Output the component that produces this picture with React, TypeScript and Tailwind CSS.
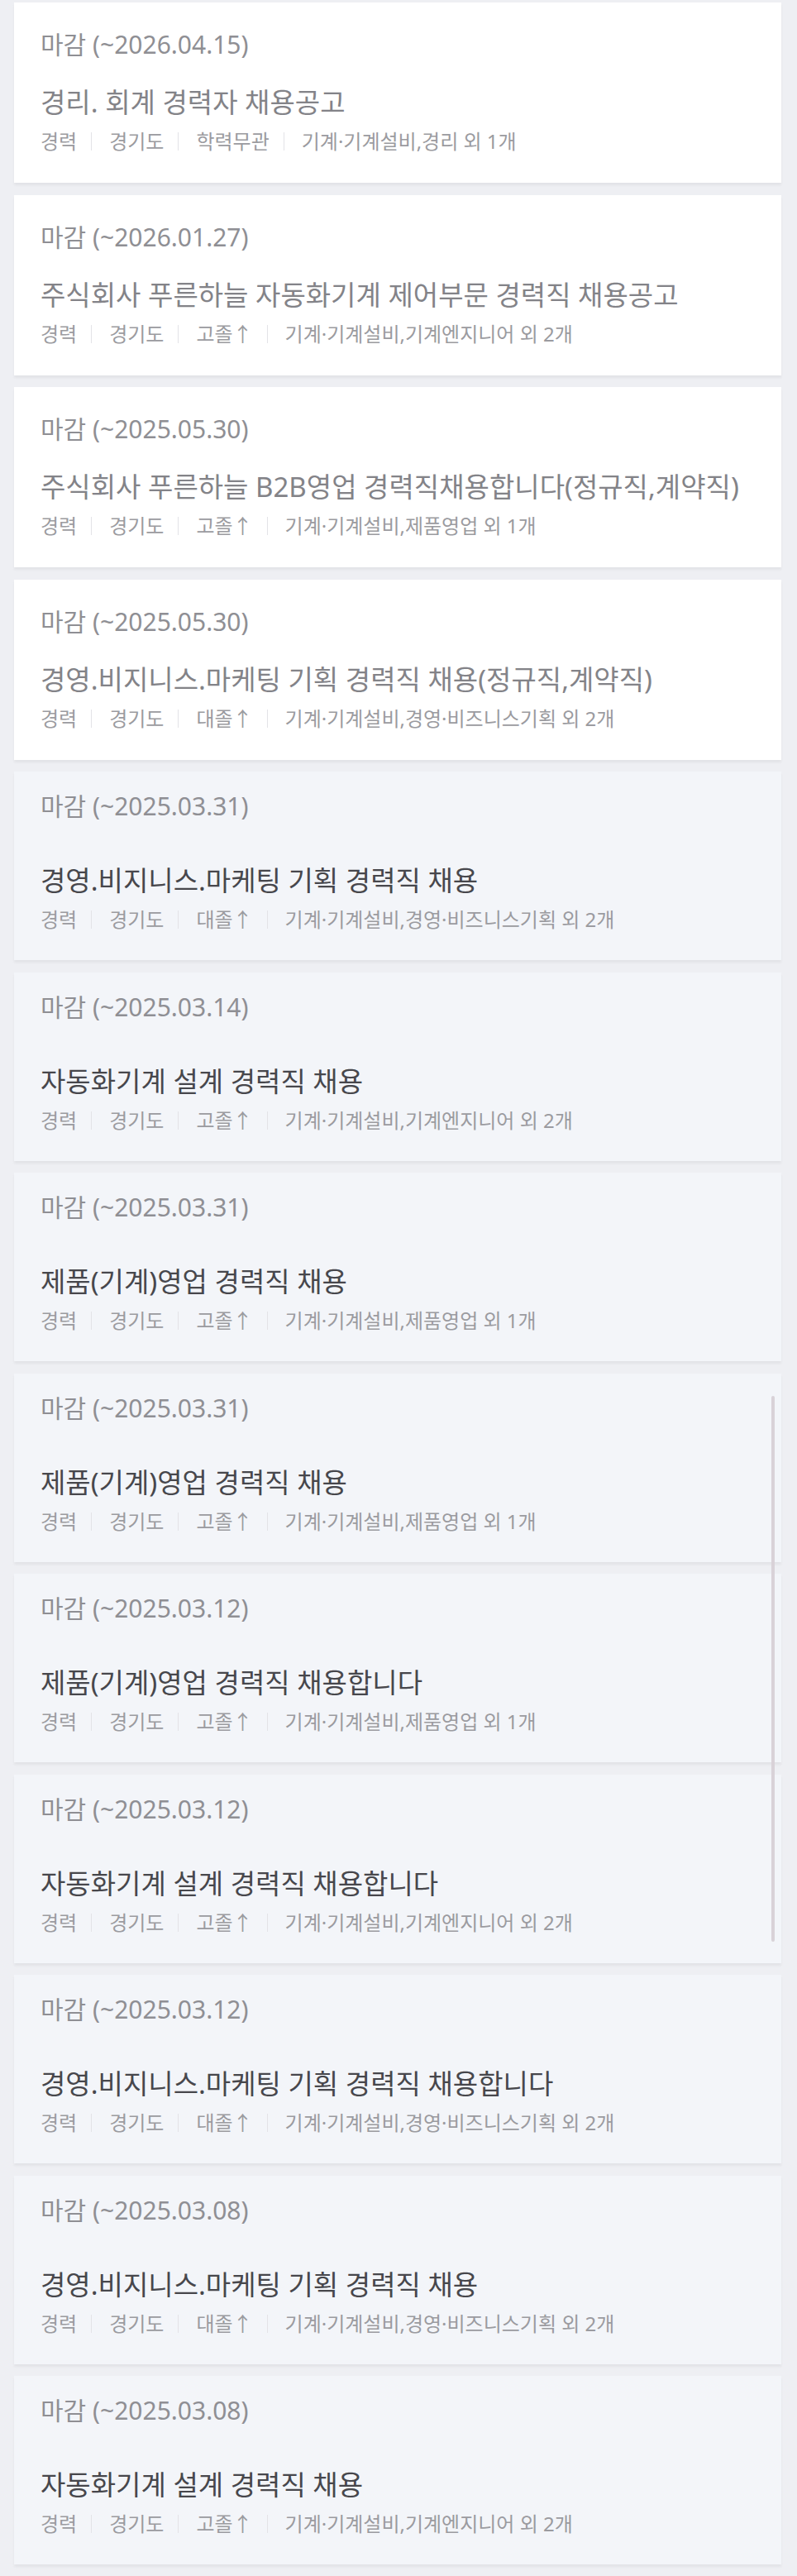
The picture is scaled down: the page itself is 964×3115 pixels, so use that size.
import React from 'react';

type Job = {
  deadline: string;
  title: string;
  edu: string;
  jobs: string;
  closed?: boolean;
};

const jobs: Job[] = [
  { deadline: '2026.04.15', title: '경리. 회계 경력자 채용공고', edu: '학력무관', jobs: '기계·기계설비,경리 외 1개' },
  { deadline: '2026.01.27', title: '주식회사 푸른하늘 자동화기계 제어부문 경력직 채용공고', edu: '고졸↑', jobs: '기계·기계설비,기계엔지니어 외 2개' },
  { deadline: '2025.05.30', title: '주식회사 푸른하늘 B2B영업 경력직채용합니다(정규직,계약직)', edu: '고졸↑', jobs: '기계·기계설비,제품영업 외 1개' },
  { deadline: '2025.05.30', title: '경영.비지니스.마케팅 기획 경력직 채용(정규직,계약직)', edu: '대졸↑', jobs: '기계·기계설비,경영·비즈니스기획 외 2개' },
  { deadline: '2025.03.31', title: '경영.비지니스.마케팅 기획 경력직 채용', edu: '대졸↑', jobs: '기계·기계설비,경영·비즈니스기획 외 2개', closed: true },
  { deadline: '2025.03.14', title: '자동화기계 설계 경력직 채용', edu: '고졸↑', jobs: '기계·기계설비,기계엔지니어 외 2개', closed: true },
  { deadline: '2025.03.31', title: '제품(기계)영업 경력직 채용', edu: '고졸↑', jobs: '기계·기계설비,제품영업 외 1개', closed: true },
  { deadline: '2025.03.31', title: '제품(기계)영업 경력직 채용', edu: '고졸↑', jobs: '기계·기계설비,제품영업 외 1개', closed: true },
  { deadline: '2025.03.12', title: '제품(기계)영업 경력직 채용합니다', edu: '고졸↑', jobs: '기계·기계설비,제품영업 외 1개', closed: true },
  { deadline: '2025.03.12', title: '자동화기계 설계 경력직 채용합니다', edu: '고졸↑', jobs: '기계·기계설비,기계엔지니어 외 2개', closed: true },
  { deadline: '2025.03.12', title: '경영.비지니스.마케팅 기획 경력직 채용합니다', edu: '대졸↑', jobs: '기계·기계설비,경영·비즈니스기획 외 2개', closed: true },
  { deadline: '2025.03.08', title: '경영.비지니스.마케팅 기획 경력직 채용', edu: '대졸↑', jobs: '기계·기계설비,경영·비즈니스기획 외 2개', closed: true },
  { deadline: '2025.03.08', title: '자동화기계 설계 경력직 채용', edu: '고졸↑', jobs: '기계·기계설비,기계엔지니어 외 2개', closed: true },
];

function Sep() {
  return <span className="ml-[17px] mr-[21px] h-[22px] w-px bg-[#e3e3e7]" />;
}

function JobCard({ job }: { job: Job }) {
  const meta = ['경력', '경기도', job.edu, job.jobs];
  return (
    <div
      className={`flex flex-col px-[32px] pb-[33px] shadow-[0_3px_3px_rgba(0,0,0,0.05)] ${
        job.closed ? 'h-[228px] bg-[#f3f5f9] pt-[22px]' : 'h-[218px] bg-white pt-[31px]'
      }`}
    >
      <div className="text-[30px] leading-[40px] text-[#8f8f94]">마감 (~{job.deadline})</div>
      <div
        className={`whitespace-nowrap text-[33px] leading-[44px] ${
          job.closed ? 'mt-[48px] text-[#47474c]' : 'mt-[28px] text-[#838388]'
        }`}
      >
        {job.title}
      </div>
      <div className="mt-[9px] flex items-center whitespace-nowrap text-[24px] leading-[32px] text-[#9b9ba0]">
        {meta.map((m, i) => (
          <React.Fragment key={i}>
            {i > 0 && <Sep />}
            <span>{m}</span>
          </React.Fragment>
        ))}
      </div>
    </div>
  );
}

export default function App() {
  return (
    <div className="relative min-h-[3115px] bg-[#eeeff3] pt-[3px] pl-[17px] pr-[19px] font-['Noto_Sans','Noto_Sans_CJK_KR',sans-serif]">
      <div className="flex flex-col gap-[14.5px]">
        {jobs.map((job, i) => (
          <JobCard key={i} job={job} />
        ))}
      </div>
      {/* overlay scrollbar thumb */}
      <div className="absolute left-[933px] top-[1688px] h-[660px] w-[4px] rounded-full bg-[#d9d2d8]" />
    </div>
  );
}
